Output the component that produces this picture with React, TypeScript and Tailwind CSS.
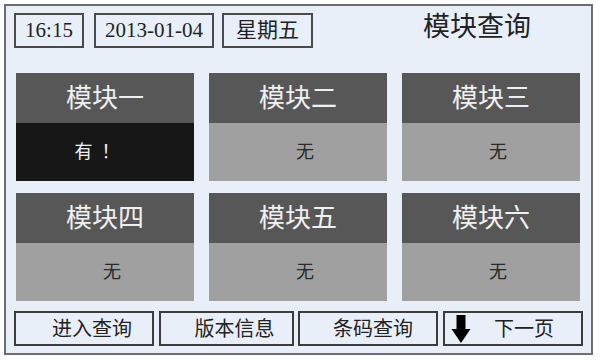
const modules = [
  { name: '模块一', status: '有\u00a0 ！', active: true },
  { name: '模块二', status: '无', active: false },
  { name: '模块三', status: '无', active: false },
  { name: '模块四', status: '无', active: false },
  { name: '模块五', status: '无', active: false },
  { name: '模块六', status: '无', active: false },
];

const font = { fontFamily: '"Liberation Serif", "Noto Sans CJK SC", serif' };

function Box({ children, w }: { children: React.ReactNode; w: string }) {
  return (
    <div className={`${w} h-[35px] flex items-center justify-center border-2 border-[#4a4a4a] text-[21px] text-[#222]`}>
      {children}
    </div>
  );
}

function App() {
  return (
    <div className="w-[600px] h-[361px] bg-white pt-[4px] pl-[4px]" style={font}>
      <div className="w-[589px] h-[351px] border-2 border-[#6e6e6e] bg-[#e9eff8] pl-[8px] pt-[7px] flex flex-col">
        {/* Header */}
        <div className="flex items-center h-[35px]">
          <Box w="w-[70px]">16:15</Box>
          <div className="w-[10px]" />
          <Box w="w-[120px]">2013-01-04</Box>
          <div className="w-[8px]" />
          <Box w="w-[91px]">星期五</Box>
          <div className="flex-1 flex justify-end pr-[60px] text-[27px] text-[#222] -mt-[6px]">模块查询</div>
        </div>

        {/* Modules */}
        <div className="grid grid-cols-[178px_178px_178px] gap-x-[15px] gap-y-[12px] mt-[25px] pl-[2px]">
          {modules.map((m) => (
            <div key={m.name} className="flex flex-col h-[108px]">
              <div className="h-[50px] bg-[#575757] flex items-center justify-center text-[26px] text-[#f0f0f0]">
                {m.name}
              </div>
              <div
                className={`flex-1 flex items-center justify-center text-[18px] ${
                  m.active ? 'bg-[#171717] text-[#f2f2f2] pr-[16px]' : 'bg-[#a0a0a0] text-[#2a2a2a] pl-[14px]'
                }`}
              >
                {m.status}
              </div>
            </div>
          ))}
        </div>

        {/* Buttons */}
        <div className="flex mt-[10px] h-[35px]">
          <div className="w-[140px] border-2 border-[#3c3c3c] flex items-center justify-center pl-[16px] text-[20px] text-[#222]">进入查询</div>
          <div className="w-[5px]" />
          <div className="w-[135px] border-2 border-[#3c3c3c] flex items-center justify-center pl-[16px] text-[20px] text-[#222]">版本信息</div>
          <div className="w-[4px]" />
          <div className="w-[140px] border-2 border-[#3c3c3c] flex items-center justify-center pl-[10px] text-[20px] text-[#222]">条码查询</div>
          <div className="w-[5px]" />
          <div className="w-[140px] border-2 border-[#3c3c3c] flex items-center pl-[6px] text-[20px] text-[#222]">
            <svg width="20" height="30" viewBox="0 0 20 30">
              <path d="M5.5 1 H14.5 V15 H19.5 L10 29 L0.5 15 H5.5 Z" fill="#000" />
            </svg>
            <span className="ml-[23px]">下一页</span>
          </div>
        </div>
      </div>
    </div>
  );
}

export default App;
